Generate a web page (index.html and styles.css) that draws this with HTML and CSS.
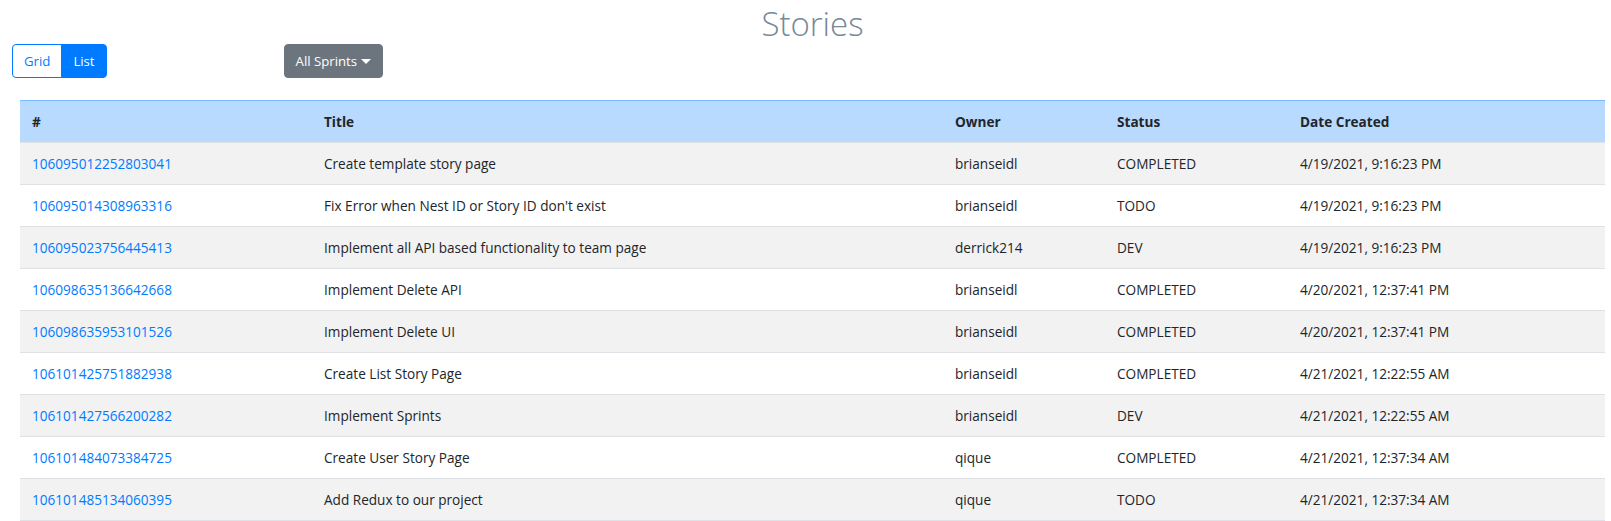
FILE: index.html
```html
<!DOCTYPE html>
<html lang="en">
<head>
<meta charset="utf-8">
<title>Stories</title>
<link rel="stylesheet" href="styles.css">
</head>
<body>
<main class="page">
  <h1 class="title">Stories</h1>
  <div class="toolbar">
    <div class="btn-group">
      <button class="btn btn-outline">Grid</button>
      <button class="btn btn-primary">List</button>
    </div>
    <button class="btn btn-secondary dropdown">All Sprints<span class="caret"></span></button>
  </div>
  <table class="stories">
    <colgroup>
      <col class="c-id"><col class="c-title"><col class="c-owner"><col class="c-status"><col class="c-date">
    </colgroup>
    <thead>
      <tr><th>#</th><th>Title</th><th>Owner</th><th>Status</th><th>Date Created</th></tr>
    </thead>
    <tbody>
      <tr><td><a href="#">106095012252803041</a></td><td>Create template story page</td><td>brianseidl</td><td>COMPLETED</td><td>4/19/2021, 9:16:23 PM</td></tr>
      <tr><td><a href="#">106095014308963316</a></td><td>Fix Error when Nest ID or Story ID don't exist</td><td>brianseidl</td><td>TODO</td><td>4/19/2021, 9:16:23 PM</td></tr>
      <tr><td><a href="#">106095023756445413</a></td><td>Implement all API based functionality to team page</td><td>derrick214</td><td>DEV</td><td>4/19/2021, 9:16:23 PM</td></tr>
      <tr><td><a href="#">106098635136642668</a></td><td>Implement Delete API</td><td>brianseidl</td><td>COMPLETED</td><td>4/20/2021, 12:37:41 PM</td></tr>
      <tr><td><a href="#">106098635953101526</a></td><td>Implement Delete UI</td><td>brianseidl</td><td>COMPLETED</td><td>4/20/2021, 12:37:41 PM</td></tr>
      <tr><td><a href="#">106101425751882938</a></td><td>Create List Story Page</td><td>brianseidl</td><td>COMPLETED</td><td>4/21/2021, 12:22:55 AM</td></tr>
      <tr><td><a href="#">106101427566200282</a></td><td>Implement Sprints</td><td>brianseidl</td><td>DEV</td><td>4/21/2021, 12:22:55 AM</td></tr>
      <tr><td><a href="#">106101484073384725</a></td><td>Create User Story Page</td><td>qique</td><td>COMPLETED</td><td>4/21/2021, 12:37:34 AM</td></tr>
      <tr><td><a href="#">106101485134060395</a></td><td>Add Redux to our project</td><td>qique</td><td>TODO</td><td>4/21/2021, 12:37:34 AM</td></tr>
    </tbody>
  </table>
</main>
</body>
</html>
```

FILE: styles.css
```css
html, body {
  margin: 0;
  padding: 0;
  background: #fff;
}
body {
  font-family: "Open Sans", "Noto Sans", sans-serif;
  font-size: 13.6px;
  color: #212529;
}
.page {
  padding: 0 6px 0 20px;
}
.title {
  margin: 0;
  box-sizing: border-box;
  height: 44px;
  padding-top: 2px;
  font-size: 33px;
  line-height: 43px;
  font-weight: 300;
  color: #778899;
  text-align: center;
}
.toolbar {
  display: flex;
  align-items: center;
  gap: 177px;
  margin: 0 0 0 -8px;
  height: 34px;
}
.btn-group {
  display: flex;
}
.btn {
  font-family: inherit;
  font-size: 13.2px;
  line-height: 20px;
  height: 34px;
  padding: 6px 11px;
  border: 1px solid transparent;
  border-radius: 4px;
  cursor: pointer;
  display: inline-flex;
  align-items: center;
}
.btn-outline {
  color: #007bff;
  background: #fff;
  border-color: #007bff;
  border-top-right-radius: 0;
  border-bottom-right-radius: 0;
}
.btn-primary {
  color: #fff;
  background: #007bff;
  border-color: #007bff;
  border-top-left-radius: 0;
  border-bottom-left-radius: 0;
  margin-left: -1px;
}
.btn-secondary {
  color: #fff;
  background: #6c757d;
  border-color: #6c757d;
}
.caret {
  display: inline-block;
  margin-left: 4px;
  width: 0;
  height: 0;
  border-top: 5px solid #fff;
  border-left: 5px solid transparent;
  border-right: 5px solid transparent;
}
.stories {
  margin-top: 22px;
  width: 1585px;
  border-collapse: collapse;
  table-layout: fixed;
}
.c-id { width: 292px; }
.c-title { width: 631px; }
.c-owner { width: 162px; }
.c-status { width: 183px; }
.c-date { width: 317px; }
.stories th,
.stories td {
  text-align: left;
  padding: 10px 12px;
  line-height: 21px;
  white-space: nowrap;
  border-bottom: 1px solid #dee2e6;
}
.stories thead th {
  background: #b8daff;
  border-top: 1px solid #7abaff;
  font-weight: 700;
}
.stories tbody tr:nth-child(odd) td {
  background: #f2f2f2;
}
.stories a {
  color: #007bff;
  text-decoration: none;
}
```
